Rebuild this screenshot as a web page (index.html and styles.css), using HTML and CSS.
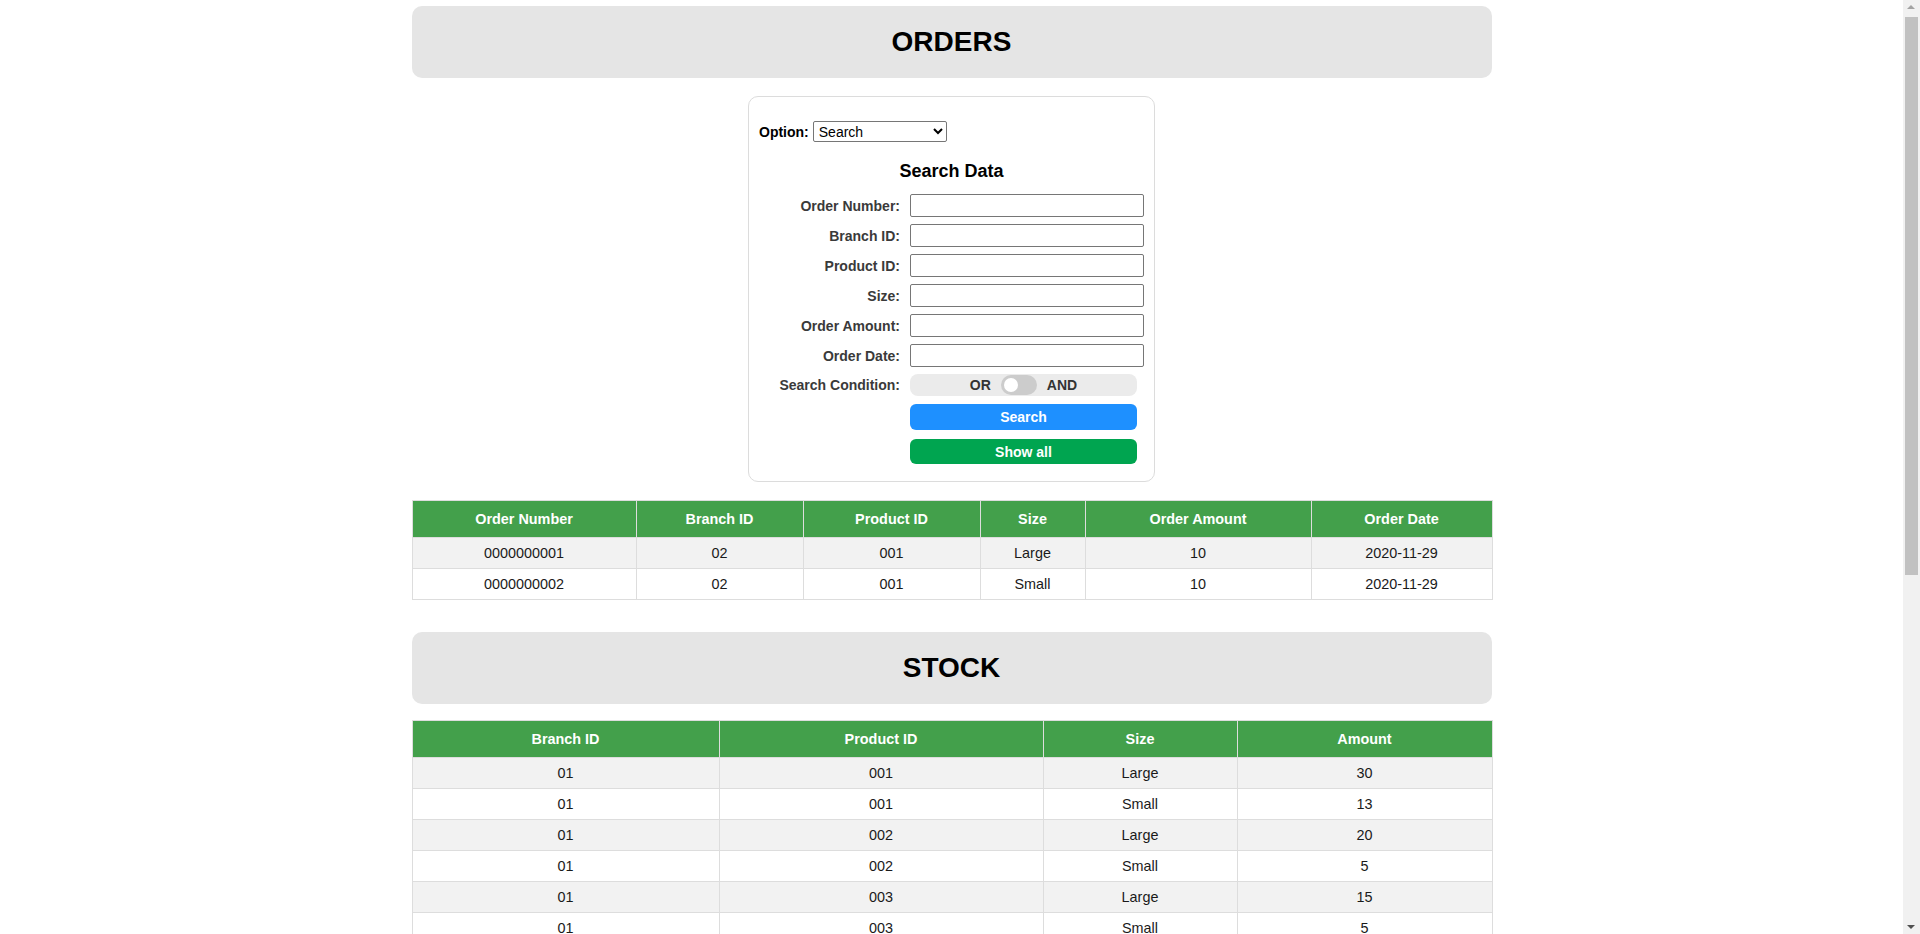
FILE: index.html
```html
<!DOCTYPE html>
<html lang="en">
<head>
<meta charset="utf-8">
<title>Orders &amp; Stock</title>
<link rel="stylesheet" href="styles.css">
</head>
<body>
<div class="page">
  <h1 class="section-title orders-title">ORDERS</h1>

  <form class="search-box">
    <div class="option-row">
      <label class="option-label" for="opt">Option:</label>
      <select id="opt" class="option-select">
        <option>Search</option>
        <option>Insert</option>
        <option>Update</option>
        <option>Delete</option>
      </select>
    </div>
    <h3 class="search-heading">Search Data</h3>
    <div class="search-grid">
      <label class="field-label">Order Number:</label><input class="field-input" type="text">
      <label class="field-label">Branch ID:</label><input class="field-input" type="text">
      <label class="field-label">Product ID:</label><input class="field-input" type="text">
      <label class="field-label">Size:</label><input class="field-input" type="text">
      <label class="field-label">Order Amount:</label><input class="field-input" type="text">
      <label class="field-label">Order Date:</label><input class="field-input" type="text">
      <label class="field-label">Search Condition:</label>
      <div class="cond-toggle">
        <span class="cond-text">OR</span>
        <span class="switch"><span class="knob"></span></span>
        <span class="cond-text">AND</span>
      </div>
      <span class="spacer"></span><button type="button" class="btn btn-search">Search</button>
      <span class="spacer"></span><button type="button" class="btn btn-all">Show all</button>
    </div>
  </form>

  <table class="data-table orders-table">
    <thead>
      <tr>
        <th class="o1">Order Number</th><th class="o2">Branch ID</th><th class="o3">Product ID</th><th class="o4">Size</th><th class="o5">Order Amount</th><th class="o6">Order Date</th>
      </tr>
    </thead>
    <tbody>
      <tr><td>0000000001</td><td>02</td><td>001</td><td>Large</td><td>10</td><td>2020-11-29</td></tr>
      <tr><td>0000000002</td><td>02</td><td>001</td><td>Small</td><td>10</td><td>2020-11-29</td></tr>
    </tbody>
  </table>

  <h1 class="section-title stock-title">STOCK</h1>

  <table class="data-table stock-table">
    <thead>
      <tr><th class="s1">Branch ID</th><th class="s2">Product ID</th><th class="s3">Size</th><th class="s4">Amount</th></tr>
    </thead>
    <tbody>
      <tr><td>01</td><td>001</td><td>Large</td><td>30</td></tr>
      <tr><td>01</td><td>001</td><td>Small</td><td>13</td></tr>
      <tr><td>01</td><td>002</td><td>Large</td><td>20</td></tr>
      <tr><td>01</td><td>002</td><td>Small</td><td>5</td></tr>
      <tr><td>01</td><td>003</td><td>Large</td><td>15</td></tr>
      <tr><td>01</td><td>003</td><td>Small</td><td>5</td></tr>
      <tr><td>01</td><td>004</td><td>Large</td><td>12</td></tr>
      <tr><td>01</td><td>004</td><td>Small</td><td>8</td></tr>
      <tr><td>01</td><td>005</td><td>Large</td><td>25</td></tr>
      <tr><td>01</td><td>005</td><td>Small</td><td>10</td></tr>
      <tr><td>01</td><td>006</td><td>Large</td><td>18</td></tr>
      <tr><td>01</td><td>006</td><td>Small</td><td>7</td></tr>
      <tr><td>02</td><td>001</td><td>Large</td><td>20</td></tr>
      <tr><td>02</td><td>001</td><td>Small</td><td>0</td></tr>
      <tr><td>02</td><td>002</td><td>Large</td><td>15</td></tr>
      <tr><td>02</td><td>002</td><td>Small</td><td>12</td></tr>
      <tr><td>02</td><td>003</td><td>Large</td><td>9</td></tr>
      <tr><td>02</td><td>003</td><td>Small</td><td>5</td></tr>
      <tr><td>02</td><td>004</td><td>Large</td><td>27</td></tr>
      <tr><td>02</td><td>004</td><td>Small</td><td>13</td></tr>
      <tr><td>02</td><td>005</td><td>Large</td><td>19</td></tr>
      <tr><td>02</td><td>005</td><td>Small</td><td>8</td></tr>
      <tr><td>02</td><td>006</td><td>Large</td><td>24</td></tr>
      <tr><td>02</td><td>006</td><td>Small</td><td>6</td></tr>
    </tbody>
  </table>
</div>

<div class="fake-scrollbar" aria-hidden="true">
  <span class="sb-arrow sb-up"></span>
  <span class="sb-thumb"></span>
  <span class="sb-arrow sb-down"></span>
</div>
</body>
</html>
```

FILE: styles.css
```css
html, body {
  margin: 0;
  padding: 0;
  background: #ffffff;
  font-family: "Liberation Sans", Arial, sans-serif;
  color: #000;
}

body {
  padding-right: 17px;
}

.page {
  width: 1080px;
  margin: 0 auto;
  padding: 6px 0 6px;
}

.section-title {
  margin: 0;
  padding: 20px 0;
  background: #e5e5e5;
  border-radius: 10px;
  text-align: center;
  font-size: 28px;
  line-height: 32px;
  font-weight: bold;
  color: #000;
}

.orders-title {
  margin-bottom: 18px;
}

.stock-title {
  margin-top: 32px;
  margin-bottom: 16px;
}

/* ---------- search box ---------- */
.search-box {
  width: 407px;
  box-sizing: border-box;
  margin: 0 auto 18px;
  padding: 24px 10px 17px;
  border: 1px solid #dcdcdc;
  border-radius: 10px;
}

.option-row {
  display: flex;
  align-items: center;
  gap: 4px;
  height: 21px;
}

.option-label {
  font-size: 14px;
  font-weight: bold;
  color: #000;
}

.option-select {
  width: 134px;
  height: 21px;
  box-sizing: border-box;
  font-family: "Liberation Sans", Arial, sans-serif;
  font-size: 14px;
  color: #000;
  background: #fff;
  border: 1px solid #767676;
  border-radius: 2px;
  padding: 0 0 0 1px;
}

.search-heading {
  margin: 19px 0 12px;
  text-align: center;
  font-size: 18px;
  line-height: 21px;
  font-weight: bold;
  color: #000;
}

.search-grid {
  display: grid;
  grid-template-columns: 1fr 234px;
  column-gap: 10px;
  row-gap: 7px;
  align-items: center;
}

.field-label {
  text-align: right;
  font-size: 14px;
  font-weight: bold;
  color: #3a3a3a;
}

.field-input {
  width: 234px;
  height: 23px;
  box-sizing: border-box;
  border: 1px solid #767676;
  border-radius: 2px;
  padding: 1px 2px;
  font-family: "Liberation Sans", Arial, sans-serif;
  font-size: 13.33px;
  background: #fff;
}

.cond-toggle {
  width: 227px;
  height: 22px;
  box-sizing: border-box;
  background: #ebebeb;
  border-radius: 8px;
  display: flex;
  align-items: center;
  justify-content: center;
  gap: 10px;
}

.cond-text {
  font-size: 14px;
  font-weight: bold;
  color: #333;
}

.switch {
  position: relative;
  width: 36px;
  height: 20px;
  border-radius: 10px;
  background: #cccccc;
}

.knob {
  position: absolute;
  left: 3px;
  top: 3px;
  width: 14px;
  height: 14px;
  border-radius: 50%;
  background: #ffffff;
}

.btn {
  width: 227px;
  height: 26px;
  border: none;
  border-radius: 6px;
  color: #fff;
  font-family: "Liberation Sans", Arial, sans-serif;
  font-size: 14px;
  font-weight: bold;
  padding: 0;
  cursor: pointer;
}

.btn-search {
  background: #1e90ff;
  margin-top: 1px;
}

.btn-all {
  background: #00a550;
  height: 25px;
  margin-top: 2px;
}

/* ---------- tables ---------- */
.data-table {
  width: 1080px;
  border-collapse: collapse;
  table-layout: fixed;
  font-size: 14.4px;
  line-height: 16px;
}

.data-table th,
.data-table td {
  border: 1px solid #dddddd;
  text-align: center;
  font-weight: normal;
  box-sizing: border-box;
}

.data-table th {
  background: #43a04b;
  color: #fff;
  font-weight: bold;
  padding: 10px 0;
}

.data-table td {
  padding: 7px 0;
  color: #1a1a1a;
}

.data-table tbody tr:nth-child(odd) td {
  background: #f2f2f2;
}

.data-table tbody tr:nth-child(even) td {
  background: #ffffff;
}

.orders-table .o1 { width: 224px; }
.orders-table .o2 { width: 167px; }
.orders-table .o3 { width: 177px; }
.orders-table .o4 { width: 105px; }
.orders-table .o5 { width: 226px; }
.orders-table .o6 { width: 181px; }

.stock-table .s1 { width: 307px; }
.stock-table .s2 { width: 324px; }
.stock-table .s3 { width: 194px; }
.stock-table .s4 { width: 255px; }

/* ---------- imitation of the window scrollbar ---------- */
.fake-scrollbar {
  position: fixed;
  top: 0;
  right: 0;
  width: 17px;
  height: 100vh;
  background: #f1f1f1;
}

.sb-thumb {
  position: absolute;
  left: 2px;
  top: 17px;
  width: 13px;
  height: 558px;
  background: #c1c1c1;
}

.sb-arrow {
  position: absolute;
  left: 4px;
  width: 0;
  height: 0;
  border-left: 4px solid transparent;
  border-right: 4px solid transparent;
}

.sb-up {
  top: 5px;
  border-bottom: 4px solid #a3a3a3;
}

.sb-down {
  bottom: 5px;
  border-top: 4px solid #505050;
}
```
